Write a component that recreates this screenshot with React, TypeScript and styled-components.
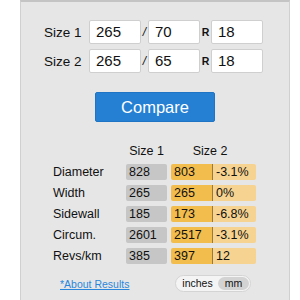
import styled, { createGlobalStyle } from "styled-components";

const GlobalStyle = createGlobalStyle`
  body {
    margin: 0;
    background: #ffffff;
    font-family: "Liberation Sans", Arial, sans-serif;
    color: #111;
  }
`;

const Panel = styled.div`
  margin-left: 20px;
  width: 268px;
  min-height: 310px;
  background: #e6e6e6;
  border: 1px solid #d0d0d0;
  border-top: 2px solid #c4c4c4;
  box-sizing: content-box;
  padding-top: 18px;
`;

const SizeRow = styled.div`
  display: flex;
  align-items: center;
  padding-left: 23px;
  height: 24px;
  margin-bottom: 5px;
`;

const SizeLabel = styled.div`
  width: 45px;
  font-size: 13.5px;
`;

const Field = styled.div`
  width: 52px;
  height: 24px;
  box-sizing: border-box;
  background: #fff;
  border: 1px solid #cfcfcf;
  border-radius: 2px;
  font-size: 15px;
  line-height: 22px;
  padding-left: 6px;
`;

const Sep = styled.div<{ $w: number; $bold?: boolean }>`
  width: ${(p) => p.$w}px;
  text-align: center;
  font-size: ${(p) => (p.$bold ? "10.5px" : "12px")};
  font-weight: ${(p) => (p.$bold ? 700 : 400)};
  font-style: ${(p) => (p.$bold ? "normal" : "italic")};
`;

const ButtonWrap = styled.div`
  display: flex;
  padding-left: 74px;
  margin-top: 19px;
`;

const CompareButton = styled.button`
  width: 120px;
  height: 30px;
  background: #2580d4;
  color: #fff;
  border: 1px solid #1f75c4;
  border-radius: 2px;
  font-family: "Liberation Sans", Arial, sans-serif;
  font-size: 16.5px;
  padding: 0;
`;

const Table = styled.div`
  margin-top: 21px;
  padding-left: 32px;
`;

const HeadRow = styled.div`
  display: flex;
  font-size: 12.5px;
  height: 16px;
  line-height: 16px;
  margin-bottom: 5px;
`;

const HeadCell = styled.div<{ $w: number }>`
  width: ${(p) => p.$w}px;
  text-align: center;
`;

const DataRow = styled.div`
  display: flex;
  align-items: center;
  height: 16px;
  margin-bottom: 5px;
  font-size: 12.5px;
`;

const RowLabel = styled.div`
  width: 73px;
`;

const Cell = styled.div<{ $tone: "gray" | "gold" | "light"; $w: number }>`
  width: ${(p) => p.$w}px;
  height: 16px;
  line-height: 16px;
  box-sizing: border-box;
  padding-left: 3px;
  background: ${(p) =>
    p.$tone === "gray" ? "#c6c6c6" : p.$tone === "gold" ? "#f3bd4e" : "#f6d390"};
  border-radius: ${(p) =>
    p.$tone === "gray" ? "2px" : p.$tone === "gold" ? "2px 0 0 2px" : "0 2px 2px 0"};
  border-right: ${(p) => (p.$tone === "gold" ? "1px solid #9a7a3a" : "none")};
  margin-right: ${(p) => (p.$tone === "gray" ? "4px" : "0")};
`;

const Footer = styled.div`
  display: flex;
  align-items: center;
  justify-content: space-between;
  padding-left: 39px;
  padding-right: 38px;
  margin-top: 11px;
`;

const AboutLink = styled.a`
  color: #2a86dc;
  font-size: 10.5px;
  text-decoration: underline;
`;

const Toggle = styled.div`
  display: flex;
  align-items: center;
  height: 17px;
  width: 76px;
  box-sizing: border-box;
  border: 1px solid #d4d4d4;
  border-radius: 9px;
  background: #f4f4f4;
  padding: 1px;
  font-size: 10.5px;
`;

const ToggleOpt = styled.div<{ $active?: boolean }>`
  flex: ${(p) => (p.$active ? "0 0 31px" : "1")};
  height: 13px;
  line-height: 13px;
  text-align: center;
  border-radius: 7px;
  background: ${(p) => (p.$active ? "#d3d3d3" : "transparent")};
`;

const rows = [
  ["Diameter", "828", "803", "-3.1%"],
  ["Width", "265", "265", "0%"],
  ["Sidewall", "185", "173", "-6.8%"],
  ["Circum.", "2601", "2517", "-3.1%"],
  ["Revs/km", "385", "397", "12"],
];

const sizes = [
  ["Size 1", "265", "70", "18"],
  ["Size 2", "265", "65", "18"],
];

export default function App() {
  return (
    <>
      <GlobalStyle />
      <Panel>
        {sizes.map(([label, w, a, r]) => (
          <SizeRow key={label}>
            <SizeLabel>{label}</SizeLabel>
            <Field>{w}</Field>
            <Sep $w={7}>/</Sep>
            <Field>{a}</Field>
            <Sep $w={11} $bold>
              R
            </Sep>
            <Field>{r}</Field>
          </SizeRow>
        ))}
        <ButtonWrap>
          <CompareButton>Compare</CompareButton>
        </ButtonWrap>
        <Table>
          <HeadRow>
            <HeadCell $w={73} />
            <HeadCell $w={41}>Size 1</HeadCell>
            <HeadCell $w={4} />
            <HeadCell $w={78}>Size 2</HeadCell>
          </HeadRow>
          {rows.map(([label, s1, s2, diff]) => (
            <DataRow key={label}>
              <RowLabel>{label}</RowLabel>
              <Cell $tone="gray" $w={41}>{s1}</Cell>
              <Cell $tone="gold" $w={42}>{s2}</Cell>
              <Cell $tone="light" $w={43}>{diff}</Cell>
            </DataRow>
          ))}
        </Table>
        <Footer>
          <AboutLink>*About Results</AboutLink>
          <Toggle>
            <ToggleOpt>inches</ToggleOpt>
            <ToggleOpt $active>mm</ToggleOpt>
          </Toggle>
        </Footer>
      </Panel>
    </>
  );
}
